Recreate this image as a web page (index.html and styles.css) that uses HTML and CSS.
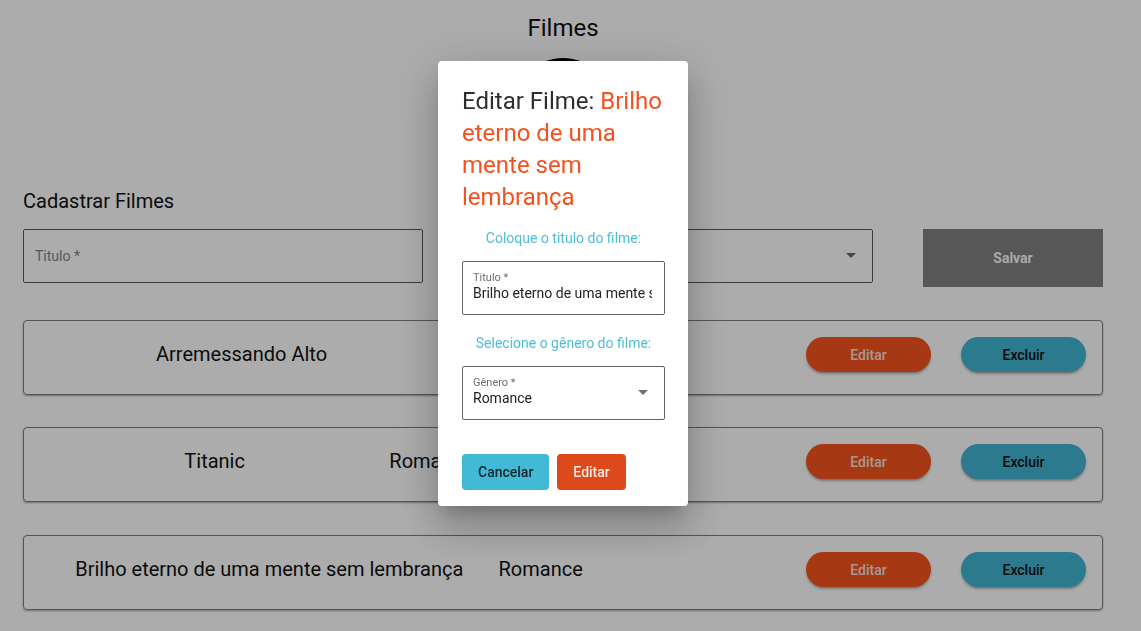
FILE: index.html
```html
<!DOCTYPE html>
<html lang="pt-BR">
<head>
<meta charset="utf-8">
<title>Filmes</title>
<link rel="stylesheet" href="styles.css">
</head>
<body>
<div class="page">
  <header class="header">
    <h1 class="title">Filmes</h1>
    <div class="logo"></div>
  </header>

  <section class="register">
    <h2 class="section-title">Cadastrar Filmes</h2>
    <div class="form-row">
      <div class="field field-title"><span class="placeholder">Titulo *</span></div>
      <div class="field field-select">
        <span class="placeholder">Gênero *</span>
        <svg class="arrow" viewBox="0 0 24 24" width="24" height="24"><path d="M7 10l5 5 5-5z"/></svg>
      </div>
      <button class="btn-save">Salvar</button>
    </div>
  </section>

  <ul class="movie-list">
    <li class="movie-card">
      <div class="movie-info"><span class="movie-text">Arremessando Alto</span><span class="movie-text">Drama</span></div>
      <div class="movie-actions"><button class="pill pill-edit">Editar</button><button class="pill pill-delete">Excluir</button></div>
    </li>
    <li class="movie-card">
      <div class="movie-info"><span class="movie-text">Titanic</span><span class="movie-text">Romance</span></div>
      <div class="movie-actions"><button class="pill pill-edit">Editar</button><button class="pill pill-delete">Excluir</button></div>
    </li>
    <li class="movie-card">
      <div class="movie-info"><span class="movie-text">Brilho eterno de uma mente sem lembrança</span><span class="movie-text">Romance</span></div>
      <div class="movie-actions"><button class="pill pill-edit">Editar</button><button class="pill pill-delete">Excluir</button></div>
    </li>
  </ul>
</div>

<div class="backdrop"></div>

<div class="modal">
  <div class="dialog">
    <h2 class="dialog-title">Editar Filme: <span class="dialog-name">Brilho eterno de uma mente sem lembrança</span></h2>
    <p class="dialog-hint hint-first">Coloque o titulo do filme:</p>
    <div class="dfield">
      <span class="dfield-label">Titulo *</span>
      <span class="dfield-value">Brilho eterno de uma mente sem lembrança</span>
    </div>
    <p class="dialog-hint hint-second">Selecione o gênero do filme:</p>
    <div class="dfield dfield-select">
      <span class="dfield-label">Gênero *</span>
      <span class="dfield-value">Romance</span>
      <svg class="darrow" viewBox="0 0 24 24" width="24" height="24"><path d="M7 10l5 5 5-5z"/></svg>
    </div>
    <div class="dialog-actions">
      <button class="dbtn dbtn-cancel">Cancelar</button>
      <button class="dbtn dbtn-edit">Editar</button>
    </div>
  </div>
</div>
</body>
</html>
```

FILE: styles.css
```css
* { box-sizing: border-box; }

html, body {
  margin: 0;
  padding: 0;
  background: #ffffff;
  font-family: Roboto, "Liberation Sans", Arial, sans-serif;
  overflow: hidden;
}

body {
  padding-right: 15px;
  height: 631px;
}

.page {
  padding: 0 23px;
  color: #111;
}

.header {
  display: flex;
  flex-direction: column;
  align-items: center;
}

.title {
  margin: 14px 0 0;
  font-size: 24px;
  line-height: 28px;
  font-weight: 400;
}

.logo {
  margin-top: 16px;
  width: 100px;
  height: 100px;
  border-radius: 50%;
  background: #000;
}

.section-title {
  margin: 31px 0 16px;
  font-size: 20px;
  line-height: 24px;
  font-weight: 400;
}

.form-row {
  display: flex;
  align-items: flex-start;
  gap: 50px;
}

.field {
  position: relative;
  width: 400px;
  height: 54px;
  border: 1px solid #595959;
  border-radius: 2px;
  display: flex;
  align-items: center;
  padding: 0 11px;
}

.placeholder {
  font-size: 14px;
  color: #7a8794;
}

.field-select .arrow {
  position: absolute;
  right: 9px;
  top: 13px;
  fill: #6a6a6a;
}

.btn-save {
  width: 180px;
  height: 58px;
  border: none;
  padding-bottom: 2px;
  background: #818181;
  color: #fafafa;
  font-family: inherit;
  font-size: 14px;
  font-weight: 700;
}

.movie-list {
  list-style: none;
  margin: 33px 0 0;
  padding: 0;
}

.movie-card {
  display: flex;
  justify-content: space-between;
  align-items: center;
  height: 75px;
  padding: 16px 16px 22px 16px;
  margin-bottom: 32px;
  border: 1px solid #7e7e7e;
  border-radius: 4px;
  box-shadow: 0 1px 2px rgba(0, 0, 0, 0.35);
}

.movie-card:nth-child(2) {
  margin-bottom: 33px;
}

.movie-info {
  width: 578px;
  display: flex;
  justify-content: space-evenly;
  align-items: center;
  padding-bottom: 1px;
}

.movie-text {
  font-size: 20px;
  line-height: 24px;
  color: #111;
}

.movie-actions {
  display: flex;
  gap: 30px;
}

.pill {
  width: 125px;
  height: 35px;
  border: none;
  border-radius: 18px;
  font-family: inherit;
  font-size: 14px;
  font-weight: 500;
  box-shadow: 0 3px 3px -2px rgba(0, 0, 0, 0.3), 0 2px 3px rgba(0, 0, 0, 0.16);
}

.pill-edit {
  background: #f8531f;
  color: #f4e2dc;
}

.pill-delete {
  background: #40b6d2;
  color: #0d0d0d;
}

.backdrop {
  position: fixed;
  inset: 0;
  background: rgba(0, 0, 0, 0.325);
}

.modal {
  position: fixed;
  inset: 0;
  padding: 61px 15px 0 0;
  display: flex;
  justify-content: center;
  align-items: flex-start;
}

.dialog {
  width: 250px;
  background: #fff;
  border-radius: 4px;
  padding: 24px 23px 16px 24px;
  box-shadow: 0 11px 15px -7px rgba(0, 0, 0, 0.2), 0 24px 38px 3px rgba(0, 0, 0, 0.14), 0 9px 46px 8px rgba(0, 0, 0, 0.12);
}

.dialog-title {
  margin: 0;
  font-size: 24px;
  line-height: 32px;
  font-weight: 400;
  color: #2e2e2e;
}

.dialog-name {
  color: #f4511e;
}

.dialog-hint {
  margin: 0;
  font-size: 14px;
  line-height: 20px;
  color: #4bbfda;
  text-align: center;
}

.hint-first { margin: 15px 0 13px; }
.hint-second { margin: 18px 0 13px; }

.dfield {
  position: relative;
  height: 54px;
  border: 1px solid #646464;
  border-radius: 2px;
  padding: 9px 12px 0 10px;
  display: flex;
  flex-direction: column;
  overflow: hidden;
}

.dfield-label {
  font-size: 11px;
  line-height: 14px;
  color: #6e6e6e;
}

.dfield-value {
  margin-top: -1px;
  font-size: 14px;
  line-height: 18px;
  color: #222;
  white-space: nowrap;
  overflow: hidden;
}

.darrow {
  position: absolute;
  right: 9px;
  top: 13px;
  fill: #707070;
}

.dialog-actions {
  margin-top: 34px;
  display: flex;
  gap: 8px;
}

.dbtn {
  height: 36px;
  padding: 0 16px;
  border: none;
  border-radius: 4px;
  font-family: inherit;
  font-size: 14px;
  font-weight: 500;
}

.dbtn-cancel {
  background: #42b9d5;
  color: #13262c;
}

.dbtn-edit {
  background: #dc4a1c;
  color: #f6e8e2;
}
```
